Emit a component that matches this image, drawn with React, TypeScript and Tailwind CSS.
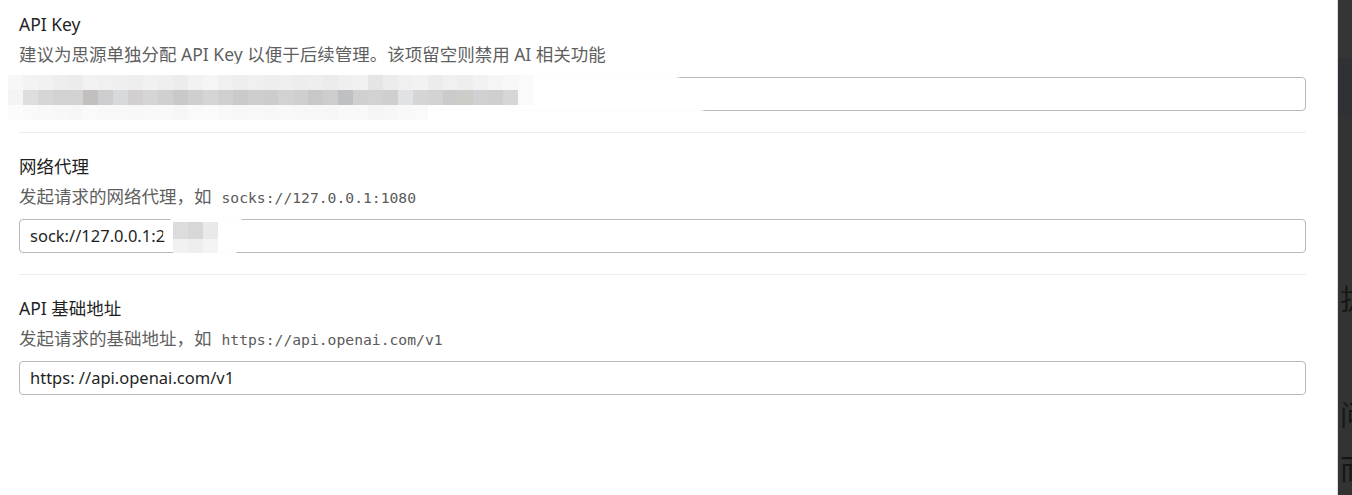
import React from 'react'

const FONT = { fontFamily: '"Noto Sans", "Noto Sans CJK SC", sans-serif' }

const ROW_A = ['#f7f7f7', '#f3f3f3', '#f1f1f1', '#eeeeee', '#ececec', '#f2f2f2', '#f0f0f0', '#efefef', '#eeeeee', '#f1f1f1', '#efefef', '#ececec', '#f2f2f2', '#f5f5f5', '#f0f0f0', '#eeeeee', '#f0f0f0', '#eeeeee', '#efefef', '#ededed', '#eeeeee', '#ebebeb', '#efefef', '#f1f1f1', '#e5e5e5', '#ececec', '#f0f0f0', '#f2f2f2', '#ececec', '#f0f0f0', '#eeeeee', '#f2f2f2', '#f5f5f5', '#f8f8f8', '#fafafa']
const ROW_B = ['#f4f4f4', '#dedede', '#d6d6d6', '#d2d2d4', '#d3d2d2', '#c3bfbf', '#cdcdcf', '#d6dadd', '#d1cfcf', '#d6d5d6', '#d0d0d0', '#c9c9c9', '#d0cfcf', '#d4d5d6', '#d0d0d1', '#c9cacb', '#cdcecd', '#cbcccc', '#d2d2d2', '#cfcfcf', '#c8c8c8', '#cdcdcd', '#bfc0c4', '#d0d0d0', '#d2d2d2', '#cfcfcf', '#e1e2e6', '#d6d5d6', '#d3d3d3', '#cbcbcb', '#ccccc9', '#d0d1d2', '#cfcfcf', '#d6d6d6', '#fafafa']

function Section({ title, desc, code, value, first, last }: { title: string; desc: string; code?: string; value: string; first?: boolean; last?: boolean }) {
  return (
    <div className={`${first ? 'pt-[12px]' : 'pt-[21px]'} pb-[21px] ${last ? '' : 'border-b border-[#ececec]'}`}>
      <div className="h-[24px] text-[17.5px] leading-[24px] text-[#1f1f1f]">{title}</div>
      <div className="mt-[6px] h-[24px] text-[17.5px] leading-[24px] text-[#5f5f5f] whitespace-nowrap">
        {desc}
        {code && <code className="ml-[10px] text-[14.7px] leading-none text-[#5a5a5a]" style={{ fontFamily: '"DejaVu Sans Mono", "Liberation Mono", monospace' }}>{code}</code>}
      </div>
      <div className="mt-[11px] h-[34px] rounded-[4px] border border-[#b8b8b8] px-[10px] flex items-center text-[16.5px] text-[#1f1f1f]">
        {value}
      </div>
    </div>
  )
}

export default function App() {
  return (
    <div className="relative flex w-[1352px] h-[495px] overflow-hidden bg-white" style={FONT}>
      <div className="flex-1 pl-[19px] pr-[31px] border-r border-[#dcdcdc]">
        <Section first title="API Key" desc="建议为思源单独分配 API Key 以便于后续管理。该项留空则禁用 AI 相关功能" value="" />
        <Section title="网络代理" desc="发起请求的网络代理，如" code="socks://127.0.0.1:1080" value="sock://127.0.0.1:2" />
        <Section last title="API 基础地址" desc="发起请求的基础地址，如" code="https://api.openai.com/v1" value="https: //api.openai.com/v1" />
      </div>

      <div className="w-[14px] flex flex-col bg-[#333333] overflow-hidden">
        <div className="h-[58px] bg-[#353535]" />
        <div className="h-[60px] bg-[#2f3134]" />
        <div className="flex-1 pl-[2px] text-[28px] leading-[32px] text-[#161616] whitespace-nowrap" style={{ fontFamily: '"Noto Sans CJK SC", sans-serif' }}>
          <div className="mt-[164px]">拔</div>
          <div className="mt-[84px]">问</div>
          <div className="mt-[22px]">而</div>
        </div>
      </div>

      {/* mosaic over the API key */}
      <div className="absolute left-[-30px] top-[62px] w-[770px] h-[68px] rounded-[50%] bg-white/95" />
      <div className="absolute left-[8px] top-[75px] flex flex-col">
        <div className="flex">{ROW_A.map((c, i) => <div key={i} className="w-[15px] h-[15px]" style={{ background: c }} />)}</div>
        <div className="flex">{ROW_B.map((c, i) => <div key={i} className="w-[15px] h-[15px]" style={{ background: c }} />)}</div>
        <div className="flex">{ROW_A.slice(0, 28).map((c, i) => <div key={i} className="w-[15px] h-[15px] opacity-40" style={{ background: c }} />)}</div>
      </div>

      {/* mosaic over the proxy port */}
      <div className="absolute left-[163px] top-[208px] w-[86px] h-[52px] rounded-[50%] bg-white/95" />
      <div className="absolute left-[173px] top-[222px] flex flex-col">
        <div className="flex">
          <div className="w-[15px] h-[17px] bg-[#dcdcdc]" />
          <div className="w-[15px] h-[17px] bg-[#d7d7d7]" />
          <div className="w-[15px] h-[17px] bg-[#e9e9eb]" />
        </div>
        <div className="flex">
          <div className="w-[15px] h-[14px] bg-[#f1f1f1]" />
          <div className="w-[15px] h-[14px] bg-[#eeeeee]" />
          <div className="w-[15px] h-[14px] bg-[#f4f4f4]" />
        </div>
      </div>
    </div>
  )
}
